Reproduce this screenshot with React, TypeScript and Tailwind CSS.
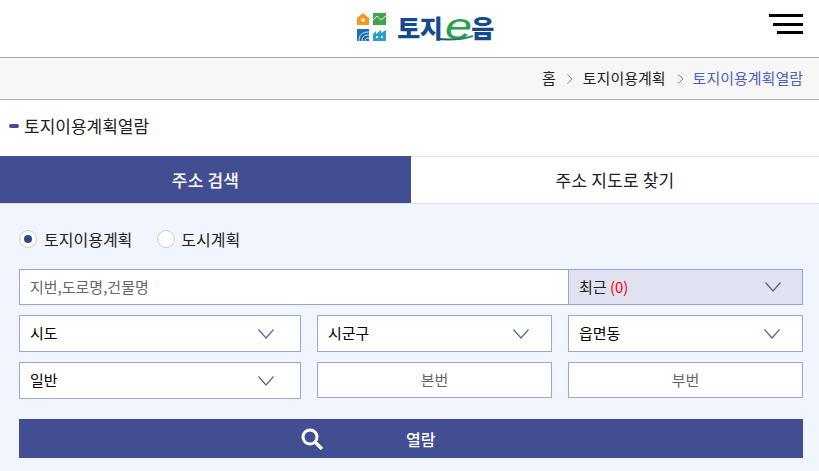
import React from 'react';

const Chevron = () => (
  <svg width="16" height="10" viewBox="0 0 16 10" fill="none" className="shrink-0">
    <path d="M0.5 0.5 L8 9 L15.5 0.5" stroke="#54698f" strokeWidth="1.2" />
  </svg>
);

const Crumb = ({ className }: { className: string }) => (
  <svg width="6" height="10" viewBox="0 0 6 10" fill="none" className={`shrink-0 ${className}`}>
    <path d="M0.5 0.5 L5 5 L0.5 9.5" stroke="#777" strokeWidth="0.9" />
  </svg>
);

const Select = ({ label, className }: { label: string; className: string }) => (
  <div className={`flex h-[37px] items-center justify-between border border-[#92a9d6] bg-white pl-[10px] text-black ${className}`}>
    <span>{label}</span>
    <Chevron />
  </div>
);

const Logo = () => (
  <div className="flex items-center gap-[11px] pl-[32px]">
    <div className="grid grid-cols-[12px_13px] gap-x-[4px] gap-y-[4px]">
      <svg width="12" height="12" viewBox="0 0 12 12">
        <path d="M0 5 L6 0 L12 5 V12 H0 Z" fill="#f39a1e" />
        <rect x="4.5" y="5.5" width="3" height="3" fill="#fff" />
      </svg>
      <svg width="13" height="12" viewBox="0 0 13 12">
        <rect width="13" height="12" fill="#3fa648" />
        <path d="M0 7 L4 3 L8 7 L13 3" fill="none" stroke="#fff" strokeWidth="1" />
      </svg>
      <svg width="12" height="12" viewBox="0 0 12 12">
        <rect width="12" height="12" fill="#1a6fb5" />
        <path d="M12 3 C5 3 2 6 2 12 M12 6 C7 6 5 8 5 12 M12 9 C9.5 9 8 10 8 12" fill="none" stroke="#fff" strokeWidth="0.8" />
      </svg>
      <svg width="13" height="12" viewBox="0 0 13 12">
        <path d="M0 5 L3 2 V5 L8 1 V12 H0 Z M8 4 L13 1 V12 H8 Z" fill="#2a9fc9" />
        <rect x="3" y="7" width="2" height="2" fill="#fff" />
        <rect x="8" y="7" width="2" height="2" fill="#fff" />
      </svg>
    </div>
    <div className="relative flex h-[26px] items-center text-[25px] leading-none font-black tracking-[-0.5px] text-[#17498f]">
      <span className="w-[48px]">토지</span>
      <span className="w-[26px] origin-left scale-x-[1.35] font-['Liberation_Sans',sans-serif] text-[36px] leading-[24px] font-normal text-[#2ba14b] italic">e</span>
      <span>음</span>
      <svg width="40" height="6" viewBox="0 0 40 6" fill="none" className="absolute top-[21px] left-[40px]">
        <defs>
          <linearGradient id="swoosh" x1="0" x2="1" y1="0" y2="0">
            <stop offset="0" stopColor="#17498f" />
            <stop offset="1" stopColor="#2ba14b" />
          </linearGradient>
        </defs>
        <path d="M0 4 C12 5 24 5 36 1" stroke="url(#swoosh)" strokeWidth="2" />
      </svg>
    </div>
  </div>
);

export default function App() {
  return (
    <div className="h-[471px] overflow-hidden bg-white font-['Noto_Sans_CJK_KR','Noto_Sans',sans-serif] text-[15px] text-[#222]">
      <header className="relative flex h-[58px] items-center justify-center border-b border-[#a8a8a8] pb-[3px]">
        <Logo />
        <div className="absolute top-[14px] right-[16px] flex w-[34px] flex-col items-end">
          <span className="h-[3px] w-[34px] bg-black" />
          <span className="mt-[6px] h-[3px] w-[30px] bg-black" />
          <span className="mt-[5px] h-[3px] w-[26px] bg-black" />
        </div>
      </header>

      <nav className="flex h-[42px] items-center justify-end border-b border-[#b0b0b0] bg-[#f7f7f7] pr-[16px]">
        <span>홈</span>
        <Crumb className="mr-[10px] ml-[11px]" />
        <span>토지이용계획</span>
        <Crumb className="mr-[9px] ml-[12px]" />
        <span className="text-[#4a62b8]">토지이용계획열람</span>
      </nav>

      <div className="flex h-[56px] items-center gap-[5px] pb-[4px] pl-[9px] text-[17px]">
        <span className="h-[4px] w-[10px] rounded-full bg-[#434d91]" />
        <span>토지이용계획열람</span>
      </div>

      <div className="grid h-[48px] grid-cols-[411px_1fr] border-b border-[#d9dfe9] text-[17px] tracking-[0.2px]">
        <div className="flex items-center justify-center bg-[#434d91] font-medium text-white">주소 검색</div>
        <div className="flex items-center justify-center border-t border-[#e2e2e2] bg-white">주소 지도로 찾기</div>
      </div>

      <section className="h-[267px] bg-[#f1f6fe] pt-[23px] pr-[16px] pl-[19px]">
        <div className="flex h-[24px] items-center text-[16px]">
          <span className="mr-[7px] flex h-[18px] w-[18px] items-center justify-center rounded-full border border-[#ccc] bg-white">
            <span className="h-[8px] w-[8px] rounded-full bg-[#2e4a86]" />
          </span>
          <span>토지이용계획</span>
          <span className="mr-[6px] ml-[25px] h-[18px] w-[18px] rounded-full border border-[#ccc] bg-white" />
          <span>도시계획</span>
        </div>

        <div className="mt-[18px] flex h-[36px]">
          <div className="flex flex-1 items-center border border-r-0 border-[#92a9d6] bg-white pl-[10px] text-[#666]">
            지번,도로명,건물명
          </div>
          <div className="flex w-[235px] items-center justify-between border border-[#92a9d6] bg-[#e0e2f2] pr-[21px] pl-[10px]">
            <span>
              최근 <span className="text-[#f00]">(0)</span>
            </span>
            <Chevron />
          </div>
        </div>

        <div className="mt-[10px] flex gap-[16px]">
          <Select label="시도" className="w-[282px] pr-[26px]" />
          <Select label="시군구" className="w-[235px] pr-[22px]" />
          <Select label="읍면동" className="w-[235px] pr-[22px]" />
        </div>

        <div className="mt-[10px] flex items-start gap-[16px]">
          <Select label="일반" className="w-[282px] pr-[26px]" />
          <div className="flex h-[36px] w-[235px] items-center justify-center border border-[#92a9d6] bg-white text-[#666]">본번</div>
          <div className="flex h-[36px] w-[235px] items-center justify-center border border-[#92a9d6] bg-white text-[#666]">부번</div>
        </div>

        <button className="mt-[20px] flex h-[39px] w-full items-center gap-[83px] bg-[#434d91] pl-[282px] text-[16px] text-white">
          <svg width="22" height="22" viewBox="0 0 22 22" fill="none" className="shrink-0">
            <circle cx="9" cy="9" r="7" stroke="#fff" strokeWidth="3" />
            <path d="M14 14 L21 21" stroke="#fff" strokeWidth="3.4" />
          </svg>
          <span className="font-medium">열람</span>
        </button>
      </section>
    </div>
  );
}
